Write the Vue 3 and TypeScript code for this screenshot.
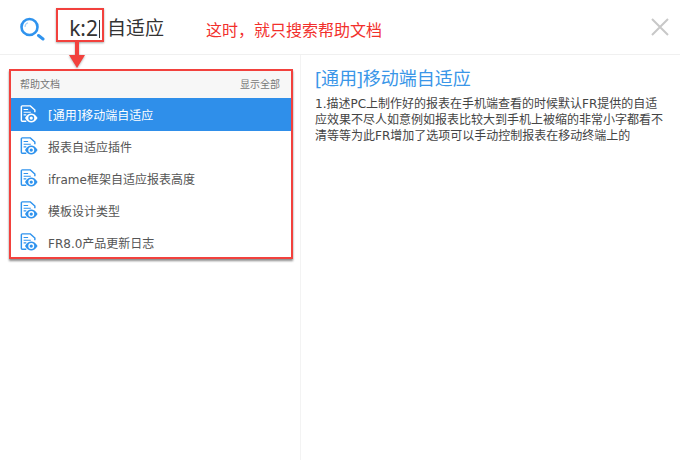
<template>
  <div class="app">
    <header class="search-bar">
      <svg class="search-icon" width="28" height="28" viewBox="0 0 28 28" fill="none">
        <circle cx="10.500" cy="14" r="8" stroke="#2f93ee" stroke-width="2.600" />
        <path d="M6 14a4.500 4.500 0 0 1 3-4.200" stroke="#a9d2f7" stroke-width="1.200" />
        <path d="M19.500 22.500l4.500 3.500" stroke="#2f93ee" stroke-width="3" stroke-linecap="round" />
      </svg>
      <div class="query">
        <span class="keyword">k:2</span><span class="caret"></span>
        <span class="term">自适应</span>
      </div>
      <div class="note">这时，就只搜索帮助文档</div>
      <svg class="close" width="20" height="20" viewBox="0 0 20 20" fill="none">
        <path d="M2 2l16 16M18 2L2 18" stroke="#c8c8c8" stroke-width="2" />
      </svg>
      <svg class="arrow" width="16" height="28" viewBox="0 0 16 28">
        <path d="M6 0h4v14h6L8 27 0 14h6z" fill="#f2413d" />
      </svg>
    </header>

    <main class="content">
      <section class="results">
        <div class="panel">
          <div class="panel-head">
            <span>帮助文档</span>
            <span>显示全部</span>
          </div>
          <div
            v-for="(item, index) in items"
            :key="item"
            class="row"
            :class="{ active: index === 0 }"
          >
            <svg class="doc-icon" width="18" height="18" viewBox="0 0 20 20" fill="none">
              <path
                d="M7 18H2.500a1 1 0 0 1-1-1V2a1 1 0 0 1 1-1h9l5 4.500V8"
                :stroke="index === 0 ? '#fff' : '#2f93ee'"
                stroke-width="1.600"
              />
              <path
                d="M4 5h5M4 8h8M4 11h3"
                :stroke="index === 0 ? '#fff' : '#2f93ee'"
                stroke-width="1.200"
              />
              <path
                d="M5.500 14.500c2-3.600 4.600-5 7-5s5 1.400 7 5c-2 3.600-4.600 5-7 5s-5-1.400-7-5z"
                :fill="index === 0 ? '#fff' : '#2f93ee'"
              />
              <circle cx="12.500" cy="14.500" r="3.300" :fill="index === 0 ? '#2f93ee' : '#fff'" />
              <circle cx="12.500" cy="14.500" r="1.800" :fill="index === 0 ? '#fff' : '#2f93ee'" />
            </svg>
            <span class="row-text">{{ item }}</span>
          </div>
        </div>
      </section>

      <article class="detail">
        <h2>[通用]移动端自适应</h2>
        <p v-for="line in lines" :key="line">{{ line }}</p>
      </article>
    </main>
  </div>
</template>

<script setup lang="ts">
const items: string[] = [
  "[通用]移动端自适应",
  "报表自适应插件",
  "iframe框架自适应报表高度",
  "模板设计类型",
  "FR8.0产品更新日志",
];

const lines: string[] = [
  "1.描述PC上制作好的报表在手机端查看的时候默认FR提供的自适",
  "应效果不尽人如意例如报表比较大到手机上被缩的非常小字都看不",
  "清等等为此FR增加了选项可以手动控制报表在移动终端上的",
];
</script>

<style>
html,
body {
  background: #fff;
}
</style>

<style scoped>
.app {
  width: 680px;
  height: 460px;
  overflow: hidden;
  background: #fff;
  font-family: "DejaVu Sans", "Noto Sans CJK SC", sans-serif;
  color: #555;
}

.search-bar {
  position: relative;
  display: flex;
  align-items: center;
  height: 55px;
  box-sizing: border-box;
  padding: 0 10px 0 19px;
  border-bottom: 1px solid #f0f0f0;
}

.search-icon {
  flex: none;
}

.query {
  position: relative;
  display: flex;
  align-items: center;
  margin-left: 9px;
  height: 34px;
  color: #333;
  font-family: "Noto Sans", "Noto Sans CJK SC", sans-serif;
}

.keyword {
  box-sizing: border-box;
  width: 48px;
  height: 34px;
  margin-bottom: 4px;
  padding: 2px 4px 0 0;
  line-height: 32px;
  text-align: right;
  font-size: 21px;
  border: 2px solid #f2413d;
  box-shadow: 0 1px 2px rgba(0, 0, 0, 0.35);
}

.caret {
  position: absolute;
  left: 43px;
  top: 10px;
  width: 1px;
  height: 18px;
  background: #333;
}

.term {
  margin-left: 3px;
  font-size: 19px;
}

.note {
  margin-left: 42px;
  margin-top: 4px;
  font-size: 16px;
  color: #f2302c;
}

.close {
  margin-left: auto;
}

.arrow {
  position: absolute;
  left: 69px;
  top: 41px;
  z-index: 2;
  filter: drop-shadow(0 1px 1px rgba(0, 0, 0, 0.3));
}

.content {
  display: flex;
  height: 405px;
}

.results {
  box-sizing: border-box;
  width: 301px;
  flex: none;
  padding: 14px 0 0 9px;
  border-right: 1px solid #f3f3f3;
}

.panel {
  box-sizing: border-box;
  width: 284px;
  border: 2px solid #f2413d;
  box-shadow: 0 2px 2px rgba(0, 0, 0, 0.45);
  background: #fff;
}

.panel-head {
  display: flex;
  justify-content: space-between;
  align-items: center;
  box-sizing: border-box;
  height: 27px;
  padding: 0 11px 3px 9px;
  background: #f7f7f7;
  font-size: 10px;
  color: #777;
}

.row {
  display: flex;
  align-items: center;
  box-sizing: border-box;
  height: 32px;
  padding: 0 0 2px 9px;
  font-size: 12px;
}

.row:last-child {
  height: 30px;
  padding-bottom: 0;
}

.row.active {
  height: 33px;
  padding-top: 1px;
  padding-bottom: 2px;
  background: #2f8fea;
  color: #fff;
}

.doc-icon {
  flex: none;
}

.row-text {
  margin-left: 10px;
}

.detail {
  padding: 10px 0 0 14px;
  min-width: 0;
}

.detail h2 {
  margin: 0 0 5px;
  font-family: "Noto Sans", "Noto Sans CJK SC", sans-serif;
  font-size: 18px;
  font-weight: 400;
  line-height: 26px;
  color: #3a96e8;
}

.detail p {
  margin: 0;
  font-size: 12px;
  line-height: 16px;
  white-space: nowrap;
  color: #444;
}
</style>
